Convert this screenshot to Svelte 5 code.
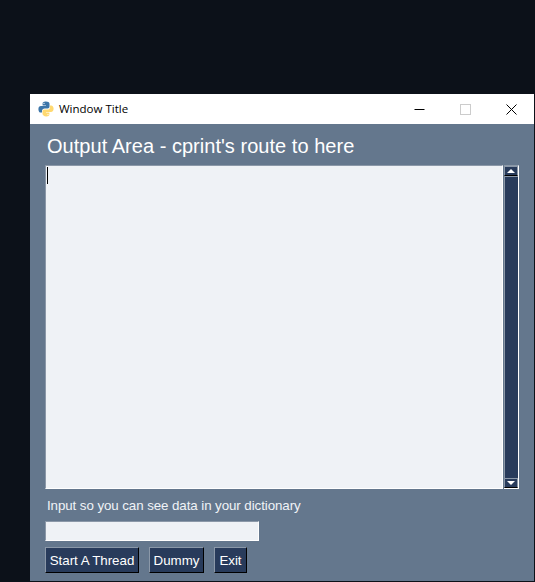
<script lang="ts">
	const buttons = ['Start A Thread', 'Dummy', 'Exit'];
</script>

<div class="desktop">
	<div class="window">
		<div class="titlebar">
			<svg class="logo" width="16" height="16" viewBox="0 0 16 16">
				<path d="M7.8 .6C5 .6 4.6 1.6 4.6 2.8V4.4H8V5H3C1.4 5 .4 6.2 .4 8.2s1 3.4 2.4 3.4h1.2V9.8c0-1.4 1.2-2.4 2.6-2.4h3c1.2 0 1.9-.9 1.9-2V2.8C11.5 1.4 10 .6 7.8 .6z" fill="#3d76a9" />
				<path d="M8.2 15.4c2.8 0 3.2-1 3.2-2.2v-1.6H8V11h5c1.6 0 2.6-1.2 2.6-3.2s-1-3.4-2.4-3.4H12v1.8c0 1.4-1.2 2.4-2.6 2.4h-3c-1.2 0-1.9.9-1.9 2v2.2c0 1.4 1.5 2.6 3.7 2.6z" fill="#ffd970" />
				<circle cx="6" cy="2.4" r=".6" fill="#fff" />
				<circle cx="10" cy="13.6" r=".6" fill="#fff" />
			</svg>
			<span class="title">Window Title</span>
			<div class="controls">
				<span class="ctl"><svg width="11" height="11" viewBox="0 0 11 11"><path d="M.5 5.5h10" stroke="#000" /></svg></span>
				<span class="ctl"><svg width="11" height="11" viewBox="0 0 11 11"><rect x=".5" y=".5" width="10" height="10" fill="none" stroke="#ccc" /></svg></span>
				<span class="ctl"><svg width="11" height="11" viewBox="0 0 11 11"><path d="M.5 .5l10 10M10.5 .5l-10 10" stroke="#000" /></svg></span>
			</div>
		</div>

		<div class="body">
			<h1>Output Area - cprint's route to here</h1>

			<div class="output-row">
				<div class="output"><span class="caret"></span></div>
				<div class="scrollbar">
					<span class="arrow"><i class="up"></i></span>
					<span class="track"></span>
					<span class="arrow"><i class="down"></i></span>
				</div>
			</div>

			<label for="dict-input">Input so you can see data in your dictionary</label>
			<input id="dict-input" type="text" />

			<div class="buttons">
				{#each buttons as b}
					<button>{b}</button>
				{/each}
			</div>
		</div>
	</div>
</div>

<style>
	:global(body) {
		margin: 0;
		background: #0c1119;
	}

	.desktop {
		height: 582px;
		box-sizing: border-box;
		padding: 94px 1px 0 30px;
		overflow: hidden;
		font-family: "Liberation Sans", Arial, sans-serif;
	}

	.window {
		height: 487px;
		display: flex;
		flex-direction: column;
		background: #64778d;
	}

	.titlebar {
		height: 30px;
		flex: none;
		display: flex;
		align-items: center;
		background: #fff;
		padding-left: 8px;
	}

	.logo {
		margin-right: 5px;
	}

	.title {
		font-size: 11.5px;
		font-family: "Open Sans", "Liberation Sans", sans-serif;
		color: #000;
		margin-bottom: 2px;
	}

	.controls {
		margin-left: auto;
		display: flex;
	}

	.ctl {
		width: 46px;
		height: 30px;
		display: flex;
		align-items: center;
		justify-content: center;
	}

	.ctl svg {
		display: block;
	}

	.body {
		flex: 1;
		display: flex;
		flex-direction: column;
		padding: 10px 15px 0;
	}

	h1 {
		margin: 0 0 6px 2px;
		font-size: 20px;
		font-weight: 400;
		line-height: 25px;
		letter-spacing: 0.03px;
		color: #fff;
	}

	.output-row {
		display: flex;
		gap: 1px;
		height: 324px;
	}

	.output {
		width: 459px;
		box-sizing: border-box;
		background: #eff2f6;
		border: 1px solid #8b98a8;
		border-bottom-color: #fff;
		border-right-color: #fff;
		padding: 1px 1px;
	}

	.caret {
		display: block;
		width: 1px;
		height: 17px;
		background: #000;
	}

	.scrollbar {
		width: 14px;
		display: flex;
		flex-direction: column;
		background: #283b5b;
		border-top: 1px solid #8b98a8;
		border-right: 1px solid #fff;
		border-bottom: 1px solid #fff;
		box-sizing: content-box;
		height: 322px;
	}

	.arrow {
		height: 10px;
		flex: none;
		display: flex;
		align-items: center;
		justify-content: center;
		background: #283b5b;
		border: 1px solid #8b98a8;
		box-sizing: border-box;
		border-bottom: 1px solid #000;
	}

	.arrow i {
		width: 0;
		height: 0;
		border-left: 4px solid transparent;
		border-right: 4px solid transparent;
	}

	.arrow i.up {
		border-bottom: 4px solid #fff;
	}

	.arrow i.down {
		border-top: 4px solid #fff;
	}

	.track {
		flex: 1;
		border-left: 1px solid #8b98a8;
		border-top: 1px solid #8b98a8;
	}

	label {
		margin: 8px 0 0 2px;
		font-size: 13.33px;
		line-height: 17px;
		letter-spacing: -0.08px;
		color: #f0f3f7;
	}

	input {
		width: 214px;
		height: 20px;
		box-sizing: border-box;
		margin: 7px 0 6px;
		padding: 0;
		background: #eff2f6;
		border: 1px solid #8b98a8;
		border-right-color: #fff;
		border-bottom-color: #fff;
		outline: none;
	}

	.buttons {
		display: flex;
		gap: 10px;
	}

	button {
		height: 26px;
		width: 94px;
		padding: 0;
		background: #283b5b;
		color: #fff;
		font-family: inherit;
		font-size: 13.33px;
		letter-spacing: -0.03px;
		border: 1px solid #8b98a8;
		border-right-color: #000;
		border-bottom-color: #000;
	}

	button:nth-child(2) {
		width: 55px;
	}

	button:nth-child(3) {
		width: 33px;
	}
</style>
